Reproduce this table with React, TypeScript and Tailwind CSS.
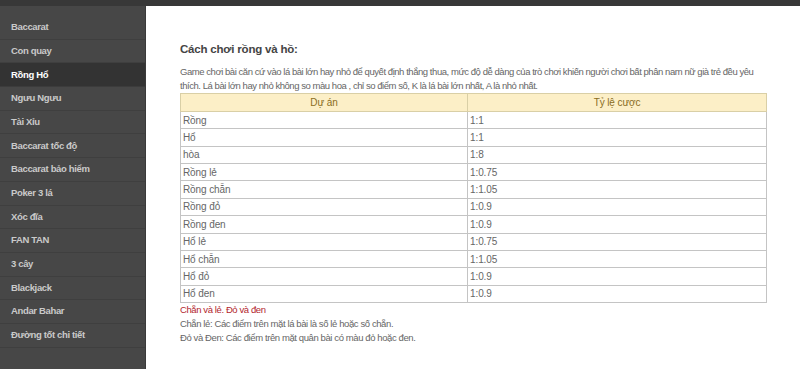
const menu = [
  "Baccarat",
  "Con quay",
  "Rồng Hổ",
  "Ngưu Ngưu",
  "Tài Xỉu",
  "Baccarat tốc độ",
  "Baccarat bảo hiểm",
  "Poker 3 lá",
  "Xóc đĩa",
  "FAN TAN",
  "3 cây",
  "Blackjack",
  "Andar Bahar",
  "Đường tốt chi tiết",
];

const rows: [string, string][] = [
  ["Rồng", "1:1"],
  ["Hổ", "1:1"],
  ["hòa", "1:8"],
  ["Rồng lẻ", "1:0.75"],
  ["Rồng chẵn", "1:1.05"],
  ["Rồng đỏ", "1:0.9"],
  ["Rồng đen", "1:0.9"],
  ["Hổ lẻ", "1:0.75"],
  ["Hổ chẵn", "1:1.05"],
  ["Hổ đỏ", "1:0.9"],
  ["Hổ đen", "1:0.9"],
];

export default function App() {
  return (
    <div
      className="w-[800px] h-[369px] overflow-hidden bg-[#3a3a3a] flex flex-col"
      style={{ fontFamily: '"Liberation Sans", Arial, sans-serif' }}
    >
      <div className="h-[6px] shrink-0 bg-[#383838]" />
      <div className="flex flex-1 min-h-0">
        <aside className="w-[146px] shrink-0 bg-[#474747] pt-[10px] border-r border-[#3a3a3a]">
          {menu.map((m) => (
            <div
              key={m}
              className={
                m === "Rồng Hổ"
                  ? "h-[23.7px] flex items-center pl-[11px] text-[9.5px] tracking-[-0.35px] font-bold text-white bg-[#333333] border-b border-[#3c3c3c]"
                  : "h-[23.7px] flex items-center pl-[11px] text-[9.5px] tracking-[-0.35px] font-bold text-[#cacaca] border-b border-[#3f3f3f]"
              }
            >
              {m}
            </div>
          ))}
        </aside>
        <main className="flex-1 bg-white pl-[34px] pt-[36px]">
          <h2 className="text-[11.5px] leading-[14px] font-bold text-[#444] tracking-[-0.2px] mb-[9px]">
            Cách chơi rồng và hồ:
          </h2>
          <p className="text-[9.5px] leading-[14px] text-[#666] tracking-[-0.45px] whitespace-nowrap">
            Game chơi bài căn cứ vào lá bài lớn hay nhỏ để quyết định thắng thua, mức độ dễ dàng của trò chơi khiến người chơi bất phân nam nữ già trẻ đều yêu
            <br />
            thích. Lá bài lớn hay nhỏ không so màu hoa , chỉ so điểm số, K là lá bài lớn nhất, A là nhỏ nhất.
          </p>
          <table className="w-[587px] border-collapse text-[10px] tracking-[-0.1px] text-[#666]">
            <thead>
              <tr className="h-[18px] bg-[#fcefc7] text-[#8a6d1e]">
                <th className="font-normal border border-[#d9cfa6] w-[287px] p-0">Dự án</th>
                <th className="font-normal border border-[#d9cfa6] p-0">Tỷ lệ cược</th>
              </tr>
            </thead>
            <tbody>
              {rows.map(([a, b]) => (
                <tr key={a} className="h-[17.36px]">
                  <td className="border border-[#c4c4c4] pl-[2px] py-0">{a}</td>
                  <td className="border border-[#c4c4c4] pl-[2px] py-0">{b}</td>
                </tr>
              ))}
            </tbody>
          </table>
          <div className="text-[9.5px] leading-[14px] tracking-[-0.4px]">
            <p className="text-[#b3262e]">Chẵn và lẻ. Đỏ và đen</p>
            <p className="text-[#666]">Chẵn lẻ: Các điểm trên mặt lá bài là số lẻ hoặc số chẵn.</p>
            <p className="text-[#666]">Đỏ và Đen: Các điểm trên mặt quân bài có màu đỏ hoặc đen.</p>
          </div>
        </main>
      </div>
    </div>
  );
}
